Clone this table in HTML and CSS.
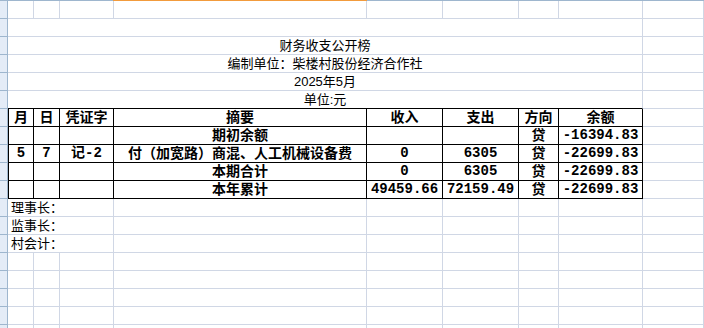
FILE: index.html
```html
<!DOCTYPE html>
<html lang="zh-CN">
<head>
<meta charset="utf-8">
<title>财务收支公开榜</title>
<link rel="stylesheet" href="styles.css">
</head>
<body>
<div class="topline"><div class="tl-a"></div><div class="tl-sel"></div><div class="tl-b"></div></div>
<div class="sheet">
  <!-- row 1 -->
  <div class="rh"></div><div class="c"></div><div class="c"></div><div class="c"></div><div class="c"></div><div class="c"></div><div class="c"></div><div class="c"></div><div class="c"></div><div class="c"></div>
  <!-- row 2 -->
  <div class="rh"></div><div class="c m8"></div><div class="c"></div>
  <!-- row 3 -->
  <div class="rh"></div><div class="c m8 title">财务收支公开榜</div><div class="c"></div>
  <!-- row 4 -->
  <div class="rh"></div><div class="c m8 title">编制单位：柴楼村股份经济合作社</div><div class="c"></div>
  <!-- row 5 -->
  <div class="rh"></div><div class="c m8 title">2025年5月</div><div class="c"></div>
  <!-- row 6 -->
  <div class="rh"></div><div class="c m8 title tb">单位:元</div><div class="c"></div>
  <!-- table header -->
  <div class="rh"></div>
  <div class="t first zh">月</div><div class="t zh">日</div><div class="t zh">凭证字</div><div class="t zh">摘要</div><div class="t zh">收入</div><div class="t zh">支出</div><div class="t zh">方向</div><div class="t zh">余额</div>
  <div class="c"></div>
  <!-- row 期初余额 -->
  <div class="rh"></div>
  <div class="t first"></div><div class="t"></div><div class="t"></div><div class="t zh">期初余额</div><div class="t"></div><div class="t"></div><div class="t zh">贷</div><div class="t num">-16394.83</div>
  <div class="c"></div>
  <!-- row entry -->
  <div class="rh"></div>
  <div class="t first num">5</div><div class="t num">7</div><div class="t mix">记-2</div><div class="t zh">付（加宽路）商混、人工机械设备费</div><div class="t num">0</div><div class="t num">6305</div><div class="t zh">贷</div><div class="t num">-22699.83</div>
  <div class="c"></div>
  <!-- row 本期合计 -->
  <div class="rh"></div>
  <div class="t first"></div><div class="t"></div><div class="t"></div><div class="t zh">本期合计</div><div class="t num">0</div><div class="t num">6305</div><div class="t zh">贷</div><div class="t num">-22699.83</div>
  <div class="c"></div>
  <!-- row 本年累计 -->
  <div class="rh"></div>
  <div class="t first"></div><div class="t"></div><div class="t"></div><div class="t zh">本年累计</div><div class="t num">49459.66</div><div class="t num">72159.49</div><div class="t zh">贷</div><div class="t num">-22699.83</div>
  <div class="c"></div>
  <!-- signature rows -->
  <div class="rh"></div><div class="c m3 sign">理事长：</div><div class="c"></div><div class="c"></div><div class="c"></div><div class="c"></div><div class="c"></div><div class="c"></div>
  <div class="rh"></div><div class="c m3 sign">监事长：</div><div class="c"></div><div class="c"></div><div class="c"></div><div class="c"></div><div class="c"></div><div class="c"></div>
  <div class="rh"></div><div class="c m3 sign">村会计：</div><div class="c"></div><div class="c"></div><div class="c"></div><div class="c"></div><div class="c"></div><div class="c"></div>
  <!-- empty rows -->
  <div class="rh"></div><div class="c"></div><div class="c"></div><div class="c"></div><div class="c"></div><div class="c"></div><div class="c"></div><div class="c"></div><div class="c"></div><div class="c"></div>
  <div class="rh"></div><div class="c"></div><div class="c"></div><div class="c"></div><div class="c"></div><div class="c"></div><div class="c"></div><div class="c"></div><div class="c"></div><div class="c"></div>
  <div class="rh"></div><div class="c"></div><div class="c"></div><div class="c"></div><div class="c"></div><div class="c"></div><div class="c"></div><div class="c"></div><div class="c"></div><div class="c"></div>
  <div class="rh"></div><div class="c"></div><div class="c"></div><div class="c"></div><div class="c"></div><div class="c"></div><div class="c"></div><div class="c"></div><div class="c"></div><div class="c"></div>
  <div class="rh"></div><div class="c"></div><div class="c"></div><div class="c"></div><div class="c"></div><div class="c"></div><div class="c"></div><div class="c"></div><div class="c"></div><div class="c"></div>
</div>
</body>
</html>
```
FILE: styles.css
```css
html, body {
  margin: 0;
  padding: 0;
  background: #ffffff;
}
body {
  width: 704px;
  height: 328px;
  overflow: hidden;
  font-family: "Liberation Sans", "Noto Sans CJK SC", sans-serif;
  color: #000000;
}
.topline {
  display: flex;
  height: 1px;
}
.tl-a {
  width: 113px;
  background: #9eb6ce;
}
.tl-sel {
  width: 254px;
  background: #f29b3c;
}
.tl-b {
  flex: 1;
  background: #9eb6ce;
}
.sheet {
  display: grid;
  grid-template-columns: 8px 26px 26px 54px 253px 76px 76px 40px 84px 1fr;
  grid-auto-rows: 18px;
}
.sheet > div {
  box-sizing: border-box;
  white-space: nowrap;
}
.rh {
  background: #e4ecf7;
  border-right: 1px solid #9eb6ce;
  border-bottom: 1px solid #9eb6ce;
}
.c {
  border-right: 1px solid #d0d7e5;
  border-bottom: 1px solid #d0d7e5;
}
.m8 {
  grid-column: span 8;
}
.m3 {
  grid-column: span 3;
}
.title {
  font-size: 13px;
  line-height: 17px;
  text-align: center;
}
.tb {
  border-bottom-color: #000000;
}
.t {
  border-right: 1px solid #000000;
  border-bottom: 1px solid #000000;
  text-align: center;
  font-weight: 700;
  line-height: 17px;
}
.first {
  border-left: 1px solid #000000;
}
.zh {
  font-size: 14px;
  font-family: "Liberation Sans", "Noto Sans CJK SC", sans-serif;
}
.num {
  font-size: 14px;
  font-family: "Liberation Mono", "DejaVu Sans Mono", monospace;
}
.mix {
  font-size: 14px;
  font-family: "Liberation Mono", "Noto Sans CJK SC", monospace;
}
.sign {
  font-size: 13px;
  line-height: 17px;
  padding-left: 3px;
  text-align: left;
}
```
